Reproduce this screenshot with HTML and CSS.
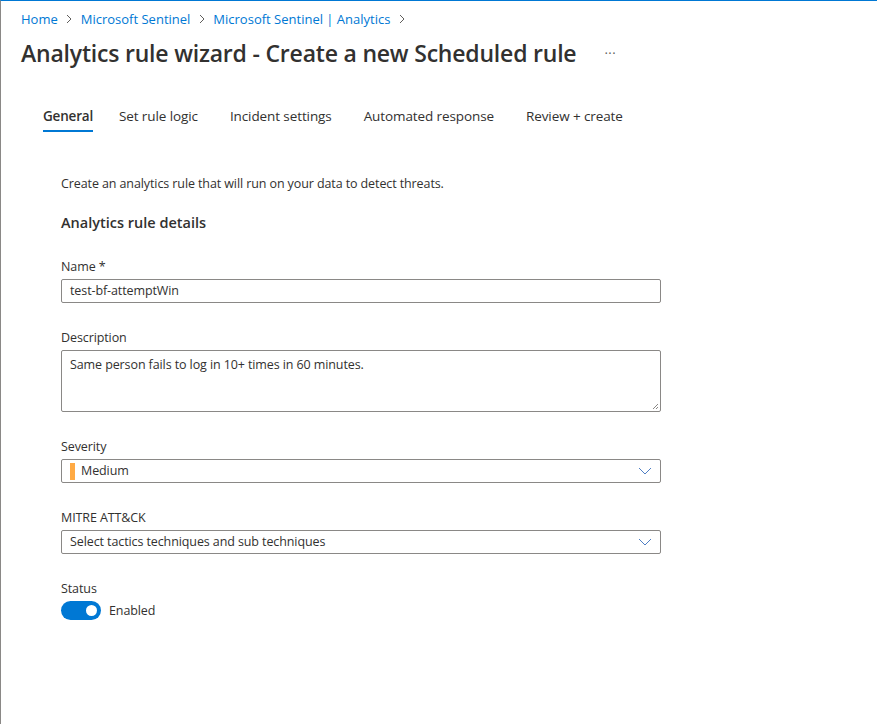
FILE: index.html
```html
<!DOCTYPE html>
<html lang="en">
<head>
<meta charset="utf-8">
<title>Analytics rule wizard</title>
<link rel="stylesheet" href="styles.css">
</head>
<body>
<div class="page">
  <nav class="breadcrumb">
    <a href="#">Home</a><span class="sep"><svg width="8" height="10" viewBox="0 0 8 10"><path d="M2 1l4 4-4 4" fill="none" stroke="#605e5c" stroke-width="1"/></svg></span>
    <a href="#">Microsoft Sentinel</a><span class="sep"><svg width="8" height="10" viewBox="0 0 8 10"><path d="M2 1l4 4-4 4" fill="none" stroke="#605e5c" stroke-width="1"/></svg></span>
    <a href="#">Microsoft Sentinel | Analytics</a><span class="sep"><svg width="8" height="10" viewBox="0 0 8 10"><path d="M2 1l4 4-4 4" fill="none" stroke="#605e5c" stroke-width="1"/></svg></span>
  </nav>
  <header class="title-row">
    <h1 class="title">Analytics rule wizard - Create a new Scheduled rule</h1>
    <span class="more">···</span>
  </header>
  <div class="tabs">
    <span class="tab active">General</span>
    <span class="tab">Set rule logic</span>
    <span class="tab">Incident settings</span>
    <span class="tab">Automated response</span>
    <span class="tab">Review + create</span>
  </div>
  <main class="form">
    <p class="intro">Create an analytics rule that will run on your data to detect threats.</p>
    <h2 class="section">Analytics rule details</h2>
    <div class="field first">
      <label class="label">Name *</label>
      <div class="input">test-bf-attemptWin</div>
    </div>
    <div class="field">
      <label class="label">Description</label>
      <div class="input textarea">Same person fails to log in 10+ times in 60 minutes.
        <svg class="grip" width="7" height="7" viewBox="0 0 7 7"><path d="M6 1L1 6M6 4L4 6" stroke="#8a8886" stroke-width="1"/></svg>
      </div>
    </div>
    <div class="field">
      <label class="label">Severity</label>
      <div class="input select"><span class="sev"></span><span class="val">Medium</span>
        <svg class="chev" width="14" height="8" viewBox="0 0 14 8"><path d="M1 1l6 6 6-6" fill="none" stroke="#4f7fc4" stroke-width="1"/></svg>
      </div>
    </div>
    <div class="field">
      <label class="label">MITRE ATT&amp;CK</label>
      <div class="input select"><span class="val">Select tactics techniques and sub techniques</span>
        <svg class="chev" width="14" height="8" viewBox="0 0 14 8"><path d="M1 1l6 6 6-6" fill="none" stroke="#4f7fc4" stroke-width="1"/></svg>
      </div>
    </div>
    <div class="field">
      <label class="label">Status</label>
      <div class="toggle-row"><span class="toggle"><span class="knob"></span></span><span class="toggle-text">Enabled</span></div>
    </div>
  </main>
</div>
</body>
</html>
```
FILE: styles.css
```css
html, body { margin: 0; padding: 0; background: #fff; }
body {
  font-family: "Open Sans", "Noto Sans", sans-serif;
  color: #323130;
  height: 725px;
  overflow: hidden;
}
.page {
  border-left: 1px solid #8a8886;
  border-top: 1px solid #0078d4;
  height: 724px;
  box-sizing: border-box;
  padding-left: 20px;
}
.breadcrumb {
  display: flex;
  align-items: center;
  height: 36px;
  font-size: 13px;
}
.breadcrumb a { color: #0078d4; text-decoration: none; }
.sep { display: inline-flex; width: 23px; justify-content: center; }
.title-row { display: flex; align-items: center; height: 32px; }
.title {
  margin: 0;
  font-size: 23px;
  font-weight: 600;
  letter-spacing: -0.2px;
  color: #323130;
}
.more { margin-left: 28px; color: #605e5c; font-size: 13px; letter-spacing: 0.5px; }
.tabs {
  display: flex;
  margin-top: 30px;
  padding-left: 22px;
  height: 36px;
}
.tab {
  font-size: 13.5px;
  letter-spacing: -0.1px;
  color: #323130;
  height: 33px;
  line-height: 34px;
  margin-right: 32px;
  box-sizing: border-box;
  white-space: nowrap;
}
.tab.active {
  border-bottom: 2px solid #0078d4;
  font-weight: 600;
  letter-spacing: -0.2px;
  margin-right: 26px;
}
.form { padding-left: 40px; width: 600px; }
.intro { margin: 40px 0 0; font-size: 12.5px; letter-spacing: -0.1px; line-height: 18px; }
.section { margin: 20px 0 0; font-size: 14.5px; font-weight: 600; line-height: 20px; }
.field { margin-top: 26px; }
.field.first { margin-top: 25px; }
.label { display: block; font-size: 12.5px; letter-spacing: -0.1px; line-height: 18px; margin-bottom: 3px; }
.input {
  position: relative;
  height: 24px;
  border: 1px solid #8a8886;
  border-radius: 2px;
  box-sizing: border-box;
  font-size: 12.5px;
  letter-spacing: -0.1px;
  line-height: 22px;
  padding: 0 8px;
  display: flex;
  align-items: center;
}
.textarea { height: 62px; align-items: flex-start; padding-top: 3px; }
.grip { position: absolute; right: 1px; bottom: 1px; }
.select .val { flex: 1; }
.sev { width: 5px; height: 17px; background: #ffaa44; margin-right: 6px; }
.toggle-row { display: flex; align-items: center; }
.toggle {
  width: 40px; height: 19px; border-radius: 10px; background: #0078d4;
  position: relative; display: inline-block;
}
.knob { position: absolute; width: 11px; height: 11px; border-radius: 50%; background: #fff; right: 4px; top: 4px; }
.toggle-text { margin-left: 8px; font-size: 12.5px; letter-spacing: -0.1px; }
```
